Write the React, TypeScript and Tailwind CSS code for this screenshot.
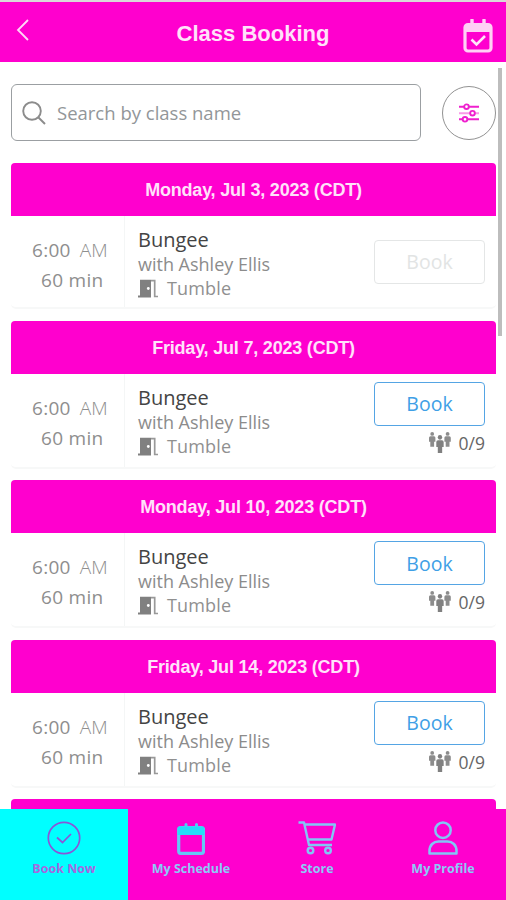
import React from "react";

const sans = "font-['Open_Sans','Noto_Sans',sans-serif]";
const helvetica = "font-['Liberation_Sans',Arial,sans-serif]";

function CalendarCheck() {
  return (
    <svg width="30" height="34" viewBox="0 0 30 34" fill="none" className="shrink-0">
      <path d="M9 1v5M21 1v5" stroke="#ffd0f5" strokeWidth="3.400" strokeLinecap="round" />
      <rect x="2" y="5.500" width="26" height="26.500" rx="3" stroke="#ffd0f5" strokeWidth="3.200" />
      <path d="M2 5h26v8H2z" fill="#ffd0f5" />
      <path d="M8.500 20.500l5 5 8.500-8.500" stroke="#ffe3f9" strokeWidth="2.600" />
    </svg>
  );
}

function Calendar() {
  return (
    <svg width="28" height="32" viewBox="0 0 28 32" fill="none">
      <path d="M9 1.500v4M19.500 1.500v4" stroke="#4fcdf5" strokeWidth="3" strokeLinecap="round" />
      <rect x="1.700" y="4.500" width="24.800" height="25.800" rx="2" stroke="#64c8f5" strokeWidth="3.200" />
      <path d="M.5 5.500q0-2 2-2h23q2 0 2 2v6.500H.5z" fill="#25ddf8" />
    </svg>
  );
}

function CheckCircle() {
  return (
    <svg width="34" height="34" viewBox="0 0 34 34" fill="none" stroke="#8a55d8" strokeWidth="1.7">
      <circle cx="17" cy="17" r="15.700" />
      <path d="M10 16.500l5.500 5 8.500-8.500" />
    </svg>
  );
}

function Cart() {
  return (
    <svg width="38" height="34" viewBox="0 0 38 34" fill="none" stroke="#83c5f5" strokeWidth="2.400">
      <path d="M.5 1.500h5.500L11 24H34M7 3.500h30L33.500 18.500H9.500" strokeLinejoin="round" />
      <circle cx="12.500" cy="29.500" r="2.800" />
      <circle cx="30" cy="29.500" r="2.800" />
    </svg>
  );
}

function Profile() {
  return (
    <svg width="30" height="34" viewBox="0 0 30 34" fill="none" stroke="#83c5f5" strokeWidth="2.500">
      <circle cx="15" cy="9.200" r="7.700" />
      <path d="M1.500 32.500V30c0-6 4-9.500 9-9.500h9c5 0 9 3.500 9 9.500v2.500z" strokeLinejoin="round" />
    </svg>
  );
}

function Door() {
  return (
    <svg width="20" height="19" viewBox="0 0 20 19" className="shrink-0">
      <path d="M0 16.500h2V.8h11v17.700H0z" fill="#808080" />
      <path d="M13 1.700h3.700v15.800H20" fill="none" stroke="#999" strokeWidth="1.700" />
      <circle cx="10.300" cy="9.500" r="1.400" fill="#fff" />
    </svg>
  );
}

function Person() {
  return (
    <>
      <circle cx="3.200" cy="1.900" r="1.900" />
      <path d="M1.500 4.300h3.400q1.500 0 1.500 1.500v4H5.100v5H1.300v-5H0v-4q0-1.500 1.500-1.500z" />
    </>
  );
}

function People() {
  return (
    <svg width="22" height="22" viewBox="0 0 22 22" fill="#8c8c8c">
      <Person />
      <g transform="translate(15.400 0)">
        <Person />
      </g>
      <g transform="translate(7.300 3) scale(1.150 1.220)" fill="#808080">
        <Person />
      </g>
    </svg>
  );
}

function DateHeader({ date }: { date: string }) {
  return (
    <div className={`flex h-[53px] items-center justify-center rounded-t-[4px] bg-[#ff00ce] pt-[2px] text-[18px] font-bold tracking-[-0.2px] text-[#ffe2fa] ${helvetica}`}>
      <span className="whitespace-nowrap">{date}</span>
    </div>
  );
}

function ClassCard({ date, open }: { date: string; open: boolean }) {
  return (
    <section className="mb-[11.500px]">
      <DateHeader date={date} />
      <div className={`flex rounded-b-[5px] border-b-2 border-[#f7f8f8] ${open ? "h-[95px]" : "h-[93.500px]"} ${sans}`}>
        <div className="flex w-[114px] shrink-0 flex-col border-r border-[#f4f6f6] pt-[19px] text-[19px] leading-[30px] text-[#8e8e8e]">
          <div className="flex gap-[9px] pl-[21px]">
            <span className="tracking-[0.300px]">6:00</span>
            <span className="font-light">AM</span>
          </div>
          <div className="pl-[30px] tracking-[0.300px] whitespace-nowrap">60 min</div>
        </div>
        <div className="flex flex-1 flex-col pt-[11px] pl-[13px]">
          <div className="text-[20px] leading-[25px] text-[#444]">Bungee</div>
          <div className="text-[18px] leading-[25px] whitespace-nowrap text-[#8c8c8c]">with Ashley Ellis</div>
          <div className="flex items-center gap-[9px] text-[18px] leading-[23px] text-[#909090]">
            <Door />
            <span className="tracking-[0.150px]">Tumble</span>
          </div>
        </div>
        <div className={`flex flex-col items-end pr-[11px] ${open ? "pt-[8px]" : "pt-[24px]"}`}>
          <button className={`h-[44px] w-[111px] rounded-[4px] border-[1.500px] pt-px text-[19.500px] ${open ? "border-[#55a5e4] text-[#3fa0e6]" : "border-[#e4e6e6] text-[#e2e4e4]"}`}>Book</button>
          {open && (
            <div className="mt-[5px] flex items-center gap-[8px] text-[17.500px] leading-[24px] text-[#666]">
              <People />
              <span>0/9</span>
            </div>
          )}
        </div>
      </div>
    </section>
  );
}

const tabs = [
  { label: "My Schedule", icon: <Calendar /> },
  { label: "Store", icon: <Cart /> },
  { label: "My Profile", icon: <Profile /> },
];

const days = [
  { date: "Monday, Jul 3, 2023 (CDT)", open: false },
  { date: "Friday, Jul 7, 2023 (CDT)", open: true },
  { date: "Monday, Jul 10, 2023 (CDT)", open: true },
  { date: "Friday, Jul 14, 2023 (CDT)", open: true },
];

export default function App() {
  return (
    <div className="flex h-[900px] w-[506px] flex-col overflow-hidden bg-white">
      <header className={`grid h-[62px] shrink-0 grid-cols-[60px_1fr_60px] border-t-2 border-[#d9d9d9] bg-[#ff00ce] ${helvetica}`}>
        <svg width="14" height="22" viewBox="0 0 14 22" className="mt-[17px] ml-[16px]" fill="none" stroke="#ffd8f7" strokeWidth="1.800">
          <path d="M12 1L2 11l10 10" />
        </svg>
        <h1 className="pt-[16px] text-center text-[22px] leading-[32px] font-bold text-[#ffe2fa]">Class Booking</h1>
        <div className="pt-[17px] pl-[17px]">
          <CalendarCheck />
        </div>
      </header>
      <main className="flex min-h-0 flex-1 overflow-hidden">
        <div className="w-[496px] shrink-0 pl-[11px]">
          <div className="mt-[22px] mb-[21.500px] flex items-center justify-between">
            <div className={`flex h-[57px] w-[410px] items-center gap-[11px] rounded-[6px] border-[1.500px] border-[#9b9fa2] pl-[10px] text-[18.500px] text-[#929699] ${sans}`}>
              <svg width="24" height="24" viewBox="0 0 24 24" fill="none" stroke="#8c8c8c" strokeWidth="1.900">
                <circle cx="10" cy="10" r="8.800" />
                <path d="M16.500 16.500l6.500 6.500" />
              </svg>
              <span className="whitespace-nowrap">Search by class name</span>
            </div>
            <button className="flex h-[54px] w-[54px] items-center justify-center rounded-full border border-[#929292]">
              <svg width="20" height="20" viewBox="0 0 20 20" fill="none" stroke="#ef20ce" strokeWidth="1.900">
                <path d="M0 3.700h5M10 3.700h10M0 16.300h3.500M8.500 16.300H20" />
                <path d="M0 10.200h11M16 10.200h4" stroke="#f99ae8" />
                <circle cx="7.500" cy="3.700" r="2.300" />
                <circle cx="13.500" cy="10.200" r="2.300" />
                <circle cx="6" cy="16.300" r="2.300" />
              </svg>
            </button>
          </div>
          {days.map((d) => (
            <ClassCard key={d.date} {...d} />
          ))}
          <DateHeader date="" />
        </div>
        <div className="mt-[6px] ml-[2px] h-[268px] w-[4px] bg-[#bdbdbd]" />
      </main>
      <nav className={`flex h-[91px] shrink-0 bg-[#ff00ce] text-[12.500px] leading-[16px] font-bold ${sans}`}>
        <div className="flex w-[128px] flex-col items-center bg-[#00ffff] pt-[12px] text-[#a668e0]">
          <CheckCircle />
          <span className="mt-[6px]">Book Now</span>
        </div>
        {tabs.map((t) => (
          <div key={t.label} className="flex w-[126px] flex-col items-center pt-[12px] text-[#8bcaf6]">
            <div className="flex h-[34px] items-end">{t.icon}</div>
            <span className="mt-[6px]">{t.label}</span>
          </div>
        ))}
      </nav>
    </div>
  );
}
